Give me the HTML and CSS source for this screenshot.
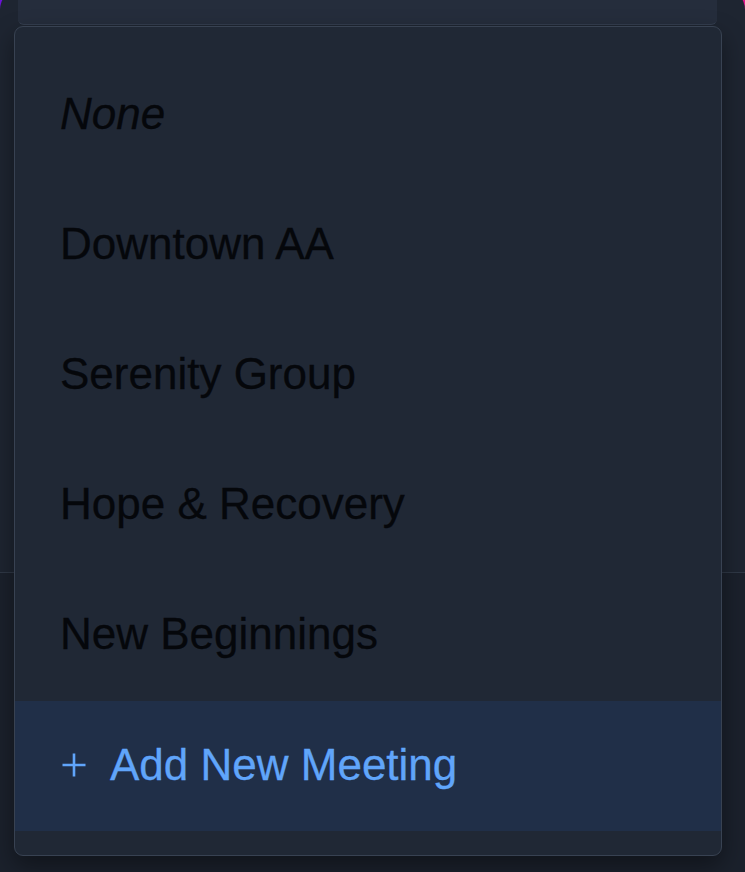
FILE: index.html
```html
<!DOCTYPE html>
<html>
<head>
<meta charset="utf-8">
<link rel="stylesheet" href="styles.css">
</head>
<body>
<div class="panel">
  <div class="field"><span class="field-text">(no)</span></div>
  <div class="body"></div>
  <div class="footer"></div>
  <div class="dropdown">
    <div class="option none">None</div>
    <div class="option">Downtown AA</div>
    <div class="option">Serenity Group</div>
    <div class="option">Hope &amp; Recovery</div>
    <div class="option">New Beginnings</div>
    <div class="option add">
      <svg class="plus" width="26" height="26" viewBox="0 0 26 26"><path d="M13 1.5v23M1.5 13h23" stroke="#60a5fa" stroke-width="2.6" fill="none"/></svg>
      <span>Add New Meeting</span>
    </div>
  </div>
</div>
</body>
</html>
```
FILE: styles.css
```css
html, body {
  margin: 0;
  padding: 0;
  height: 100%;
  overflow: hidden;
}
body {
  background: linear-gradient(90deg, #6d12d8 0%, #8e3be0 30%, #c02aa8 70%, #e0168c 100%);
  font-family: "Liberation Sans", Arial, sans-serif;
}
.panel {
  position: relative;
  margin-top: -12px;
  height: 884px;
  background: #1e2531;
  border-radius: 22px;
  display: flex;
  flex-direction: column;
}
.field {
  margin: 0 28px 0 18px;
  height: 36px;
  background: #252d3c;
  border-bottom: 1px solid #343e4f;
  border-radius: 0 0 6px 6px;
  overflow: hidden;
  position: relative;
}
.field-text {
  position: absolute;
  left: 34px;
  top: -22px;
  font-size: 30px;
  color: #e6e9ef;
}
.body {
  height: 547px;
}
.footer {
  flex: 1;
  border-top: 1px solid #2f3846;
  background: #1b212c;
}
.dropdown {
  position: absolute;
  left: 14px;
  top: 38px;
  width: 706px;
  padding: 24px 0;
  background: #202835;
  border: 1px solid #384252;
  border-radius: 9px;
  box-shadow: 0 10px 24px rgba(0, 0, 0, 0.4);
}
.option {
  height: 130px;
  box-sizing: border-box;
  display: flex;
  align-items: center;
  padding-left: 45px;
  padding-bottom: 5px;
  font-size: 44px;
  color: #05070b;
  -webkit-text-stroke: 0.3px currentColor;
}
.option.none {
  font-style: italic;
}
.option.add {
  background: #202f48;
  color: #60a5fa;
  gap: 23px;
  padding-left: 46px;
  padding-bottom: 2px;
}
.plus {
  flex: none;
}
```
